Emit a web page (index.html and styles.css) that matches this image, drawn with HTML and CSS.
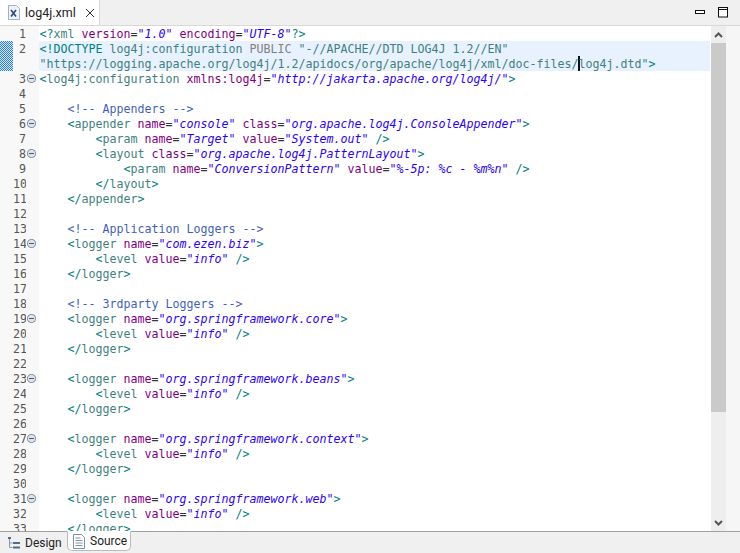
FILE: index.html
```html
<!DOCTYPE html>
<html lang="en">
<head>
  <meta charset="UTF-8">
  <title>log4j.xml</title>
  <link rel="stylesheet" href="styles.css">
</head>
<body>
<div id="app">
  <div class="tabbar">
    <div class="tab">
      <svg class="file-icon" width="12" height="15" viewBox="0 0 12 15"><path d="M0.500 0.500h8l3 3v11h-11z" fill="#eef3fa" stroke="#9fb2c9"/><path d="M3 5l5 6.500M8 5l-5 6.500" stroke="#2b4a78" stroke-width="1.600" fill="none"/></svg>
      <span class="tab-name">log4j.xml</span>
      <svg class="close-icon" width="10" height="10" viewBox="0 0 10 10"><path d="M1 1l8 8M9 1l-8 8" stroke="#333" fill="none"/></svg>
    </div>
    <div class="win-btns">
      <svg width="10" height="5" viewBox="0 0 10 5"><rect x="0.500" y="0.500" width="9" height="3" fill="#fff" stroke="#111"/></svg>
      <svg width="11" height="11" viewBox="0 0 11 11"><rect x="0.500" y="0.500" width="9" height="9.500" fill="#fff" stroke="#111"/><path d="M0 2.500h10" stroke="#111"/></svg>
    </div>
  </div>

  <div class="editor">
    <div class="ruler"><div class="ruler-mark"></div></div>
    <div class="lines">
      <div class="row"><span class="num">1</span><span class="fold"></span><span class="code"><i class="t">&lt;?</i><i class="n">xml</i> <i class="a">version</i>=<i class="v">"1.0"</i> <i class="a">encoding</i>=<i class="v">"UTF-8"</i><i class="t">?&gt;</i></span></div>
      <div class="row cur"><span class="num">2</span><span class="fold"></span><span class="code"><i class="t">&lt;!DOCTYPE</i> <i class="n">log4j:configuration</i> <i class="g">PUBLIC</i> <i class="s">"-//APACHE//DTD LOG4J 1.2//EN"</i></span></div>
      <div class="row cur"><span class="num"></span><span class="fold"></span><span class="code"><i class="d">"https://logging.apache.org/log4j/1.2/apidocs/org/apache/log4j/xml/doc-files/<b class="caret"></b>log4j.dtd"</i><i class="t">&gt;</i></span></div>
      <div class="row"><span class="num">3</span><span class="fold on"></span><span class="code"><i class="t">&lt;</i><i class="n">log4j:configuration</i> <i class="a">xmlns:log4j</i>=<i class="v">"http://jakarta.apache.org/log4j/"</i><i class="t">&gt;</i></span></div>
      <div class="row"><span class="num">4</span><span class="fold"></span><span class="code"></span></div>
      <div class="row"><span class="num">5</span><span class="fold"></span><span class="code">    <i class="c">&lt;!-- Appenders --&gt;</i></span></div>
      <div class="row"><span class="num">6</span><span class="fold on"></span><span class="code">    <i class="t">&lt;</i><i class="n">appender</i> <i class="a">name</i>=<i class="v">"console"</i> <i class="a">class</i>=<i class="v">"org.apache.log4j.ConsoleAppender"</i><i class="t">&gt;</i></span></div>
      <div class="row"><span class="num">7</span><span class="fold"></span><span class="code">        <i class="t">&lt;</i><i class="n">param</i> <i class="a">name</i>=<i class="v">"Target"</i> <i class="a">value</i>=<i class="v">"System.out"</i> <i class="t">/&gt;</i></span></div>
      <div class="row"><span class="num">8</span><span class="fold on"></span><span class="code">        <i class="t">&lt;</i><i class="n">layout</i> <i class="a">class</i>=<i class="v">"org.apache.log4j.PatternLayout"</i><i class="t">&gt;</i></span></div>
      <div class="row"><span class="num">9</span><span class="fold"></span><span class="code">            <i class="t">&lt;</i><i class="n">param</i> <i class="a">name</i>=<i class="v">"ConversionPattern"</i> <i class="a">value</i>=<i class="v">"%-5p: %c - %m%n"</i> <i class="t">/&gt;</i></span></div>
      <div class="row"><span class="num">10</span><span class="fold"></span><span class="code">        <i class="t">&lt;/</i><i class="n">layout</i><i class="t">&gt;</i></span></div>
      <div class="row"><span class="num">11</span><span class="fold"></span><span class="code">    <i class="t">&lt;/</i><i class="n">appender</i><i class="t">&gt;</i></span></div>
      <div class="row"><span class="num">12</span><span class="fold"></span><span class="code"></span></div>
      <div class="row"><span class="num">13</span><span class="fold"></span><span class="code">    <i class="c">&lt;!-- Application Loggers --&gt;</i></span></div>
      <div class="row"><span class="num">14</span><span class="fold on"></span><span class="code">    <i class="t">&lt;</i><i class="n">logger</i> <i class="a">name</i>=<i class="v">"com.ezen.biz"</i><i class="t">&gt;</i></span></div>
      <div class="row"><span class="num">15</span><span class="fold"></span><span class="code">        <i class="t">&lt;</i><i class="n">level</i> <i class="a">value</i>=<i class="v">"info"</i> <i class="t">/&gt;</i></span></div>
      <div class="row"><span class="num">16</span><span class="fold"></span><span class="code">    <i class="t">&lt;/</i><i class="n">logger</i><i class="t">&gt;</i></span></div>
      <div class="row"><span class="num">17</span><span class="fold"></span><span class="code"></span></div>
      <div class="row"><span class="num">18</span><span class="fold"></span><span class="code">    <i class="c">&lt;!-- 3rdparty Loggers --&gt;</i></span></div>
      <div class="row"><span class="num">19</span><span class="fold on"></span><span class="code">    <i class="t">&lt;</i><i class="n">logger</i> <i class="a">name</i>=<i class="v">"org.springframework.core"</i><i class="t">&gt;</i></span></div>
      <div class="row"><span class="num">20</span><span class="fold"></span><span class="code">        <i class="t">&lt;</i><i class="n">level</i> <i class="a">value</i>=<i class="v">"info"</i> <i class="t">/&gt;</i></span></div>
      <div class="row"><span class="num">21</span><span class="fold"></span><span class="code">    <i class="t">&lt;/</i><i class="n">logger</i><i class="t">&gt;</i></span></div>
      <div class="row"><span class="num">22</span><span class="fold"></span><span class="code"></span></div>
      <div class="row"><span class="num">23</span><span class="fold on"></span><span class="code">    <i class="t">&lt;</i><i class="n">logger</i> <i class="a">name</i>=<i class="v">"org.springframework.beans"</i><i class="t">&gt;</i></span></div>
      <div class="row"><span class="num">24</span><span class="fold"></span><span class="code">        <i class="t">&lt;</i><i class="n">level</i> <i class="a">value</i>=<i class="v">"info"</i> <i class="t">/&gt;</i></span></div>
      <div class="row"><span class="num">25</span><span class="fold"></span><span class="code">    <i class="t">&lt;/</i><i class="n">logger</i><i class="t">&gt;</i></span></div>
      <div class="row"><span class="num">26</span><span class="fold"></span><span class="code"></span></div>
      <div class="row"><span class="num">27</span><span class="fold on"></span><span class="code">    <i class="t">&lt;</i><i class="n">logger</i> <i class="a">name</i>=<i class="v">"org.springframework.context"</i><i class="t">&gt;</i></span></div>
      <div class="row"><span class="num">28</span><span class="fold"></span><span class="code">        <i class="t">&lt;</i><i class="n">level</i> <i class="a">value</i>=<i class="v">"info"</i> <i class="t">/&gt;</i></span></div>
      <div class="row"><span class="num">29</span><span class="fold"></span><span class="code">    <i class="t">&lt;/</i><i class="n">logger</i><i class="t">&gt;</i></span></div>
      <div class="row"><span class="num">30</span><span class="fold"></span><span class="code"></span></div>
      <div class="row"><span class="num">31</span><span class="fold on"></span><span class="code">    <i class="t">&lt;</i><i class="n">logger</i> <i class="a">name</i>=<i class="v">"org.springframework.web"</i><i class="t">&gt;</i></span></div>
      <div class="row"><span class="num">32</span><span class="fold"></span><span class="code">        <i class="t">&lt;</i><i class="n">level</i> <i class="a">value</i>=<i class="v">"info"</i> <i class="t">/&gt;</i></span></div>
      <div class="row"><span class="num">33</span><span class="fold"></span><span class="code">    <i class="t">&lt;/</i><i class="n">logger</i><i class="t">&gt;</i></span></div>
    </div>
    <div class="scrollbar">
      <div class="arrow"><svg width="9" height="6" viewBox="0 0 9 6"><path d="M1 5l3.500-3.500L8 5" stroke="#555" stroke-width="2" fill="none"/></svg></div>
      <div class="thumb"></div>
      <div class="track"></div>
      <div class="arrow"><svg width="9" height="6" viewBox="0 0 9 6"><path d="M1 1l3.500 3.500L8 1" stroke="#555" stroke-width="2" fill="none"/></svg></div>
    </div>
    <div class="side-strip"></div>
  </div>

  <div class="bottom">
    <div class="btab">
      <svg width="12" height="12" viewBox="0 0 12 12"><path d="M1.500 2v8.500h3M1.500 6h3" stroke="#8a98a8" fill="none"/><path d="M0 0h3v2H0zM5 5h7v2H5zM5 9.500h7v2H5z" fill="#4f6d8f"/></svg>
      <span>Design</span>
    </div>
    <div class="btab active">
      <svg width="12" height="15" viewBox="0 0 12 15"><path d="M0.500 0.500h8l3 3v11h-11z" fill="#fff" stroke="#7f93ad"/><path d="M2.500 4h5M2.500 6.500h7M2.500 9h7M2.500 11.500h7" stroke="#7f93ad"/></svg>
      <span>Source</span>
    </div>
  </div>
</div>
</body>
</html>
```

FILE: styles.css
```css
/* page */
html, body {
  margin: 0;
  padding: 0;
  background: #fff;
}

#app {
  display: flex;
  flex-direction: column;
  width: 740px;
  height: 553px;
  overflow: hidden;
  font-family: Roboto, "Noto Sans CJK KR", sans-serif;
}

/* top tab bar */
.tabbar {
  display: flex;
  justify-content: space-between;
  height: 25px;
  flex-shrink: 0;
  background: #f0f0f0;
  border-bottom: 1px solid #d8d8d8;
}
.tab {
  display: flex;
  align-items: center;
  width: 100px;
  box-sizing: border-box;
  padding-left: 8px;
  background: #fff;
  border-right: 1px solid #d8d8d8;
}
.tab-name {
  margin-left: 5px;
  font-size: 12.500px;
  color: #222;
}
.close-icon {
  margin-left: 9px;
}
.win-btns {
  display: flex;
  align-items: center;
  gap: 13px;
  padding-right: 11px;
}

/* editor */
.editor {
  display: flex;
  flex: 1;
  min-height: 0;
  background: #fff;
}
.ruler {
  width: 13px;
  flex-shrink: 0;
  padding-top: 15px;
  background: #f8f8f8;
}
.ruler-mark {
  height: 30px;
  background: repeating-conic-gradient(#2a7fd0 0 25%, #d5e6f7 0 50%) 0 0 / 2px 2px;
}
.lines {
  flex: 1;
  min-width: 0;
  overflow: hidden;
}
.row {
  display: flex;
  height: 15px;
  font-family: "DejaVu Sans Mono", monospace;
  font-size: 11.630px;
  line-height: 17px;
  white-space: pre;
}
.num {
  width: 13px;
  flex-shrink: 0;
  text-align: right;
  color: #555;
  background: #f8f8f8;
}
.fold {
  width: 13px;
  flex-shrink: 0;
  background: #f8f8f8 no-repeat;
}
.fold.on {
  background-image: radial-gradient(circle at 5.500px 7.500px, #dde3ea 3.400px, #8e9aa7 3.800px, #8e9aa7 4.300px, #f8f8f8 4.800px);
}
.fold.on::after {
  content: "";
  display: block;
  width: 5px;
  height: 1px;
  margin: 7px 0 0 3px;
  background: #4f5a66;
}
.code {
  flex: 1;
  padding-left: 0.500px;
  color: #333;
}
.cur .code {
  background: #e8f2fe;
}
.code i {
  font-style: normal;
}
.t { color: #008080; }
.n { color: #3f7f7f; }
.a { color: #7f007f; }
.code .v { color: #2a00ff; font-style: italic; }
.c { color: #3f5fbf; }
.g { color: #808080; }
.s { color: #3f7f7f; }
.d { color: #3f7f7f; }
.caret {
  display: inline-block;
  width: 2px;
  height: 15px;
  margin: 0 -2px 0 0;
  vertical-align: top;
  background: #111;
}

/* scroll bar */
.scrollbar {
  display: flex;
  flex-direction: column;
  width: 15px;
  flex-shrink: 0;
  margin-left: 1px;
  background: #eeeeee;
}
.arrow {
  display: flex;
  align-items: center;
  justify-content: center;
  height: 17px;
  flex-shrink: 0;
}
.thumb {
  height: 369px;
  background: #cacaca;
}
.track {
  flex: 1;
}
.side-strip {
  width: 14px;
  flex-shrink: 0;
  background: #f6f6f6;
}

/* bottom tabs */
.bottom {
  display: flex;
  height: 22px;
  flex-shrink: 0;
  box-sizing: border-box;
  background: #f0f0f0;
  border-top: 1px solid #a0a0a0;
}
.btab {
  display: flex;
  align-items: center;
  gap: 5px;
  width: 67px;
  box-sizing: border-box;
  padding-left: 8px;
  font-size: 12px;
  color: #222;
}
.btab.active {
  width: 64px;
  height: 20px;
  margin-top: -1px;
  padding-left: 5px;
  background: #fff;
  border: 1px solid #bbb;
  border-top: 1px solid #fff;
  border-radius: 0 0 5px 5px;
}
```
